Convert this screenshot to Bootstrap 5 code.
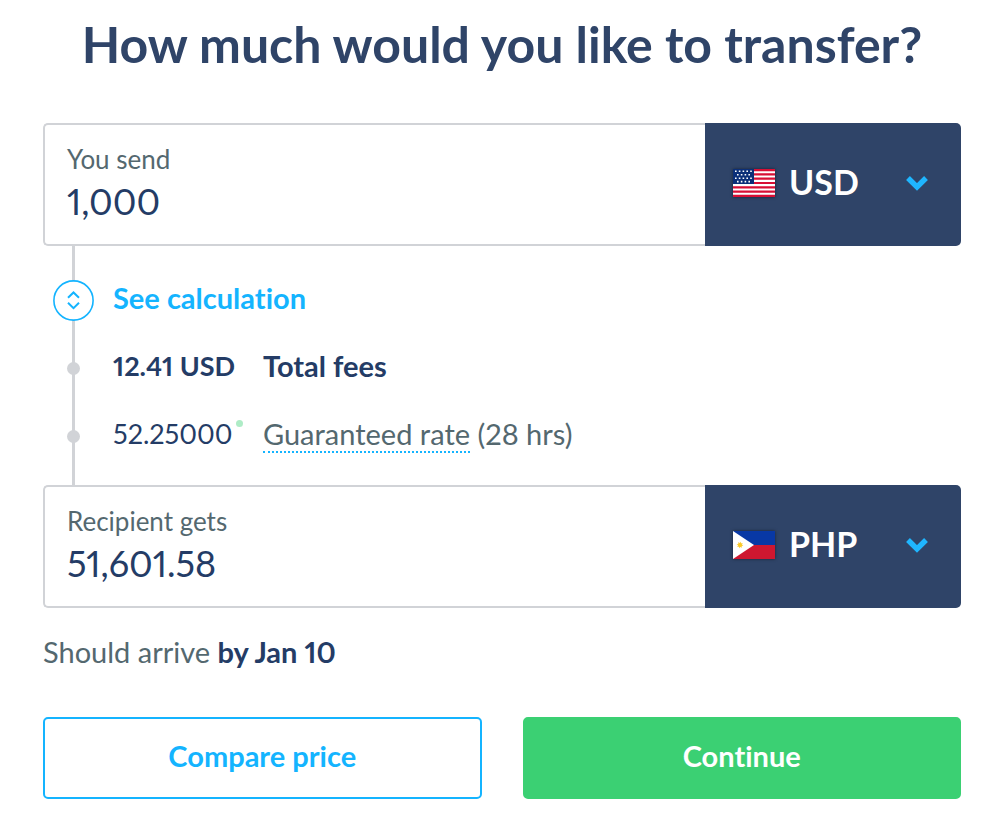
<!DOCTYPE html>
<html lang="en">
<head>
<meta charset="utf-8">
<meta name="viewport" content="width=device-width, initial-scale=1">
<title>Transfer</title>
<link rel="stylesheet" href="https://cdn.jsdelivr.net/npm/bootstrap@5.3.0/dist/css/bootstrap.min.css">
<style>
  :root { --navy: #2f4468; --ink: #243c66; --sky: #14b4ff; --slate: #54686f; --line: #d1d3d7; --go: #3bd073; }
  body { font-family: Lato, "Liberation Sans", sans-serif; font-size: 29px; line-height: 36px; color: var(--slate); background: #fff; }
  body, button, input, select { font-variant-ligatures: none; font-variant-numeric: proportional-nums; }
  .calculator { padding: 14px 39px 39px 43px; }
  .headline { font-size: 50px; line-height: 60px; font-weight: 700; color: var(--navy); margin-bottom: 49px; }
  .money { height: 123px; }
  .money-field { border: 2px solid var(--line); border-right: 0; border-radius: 5px 0 0 5px; padding: 18px 22px; }
  .money-field label { font-size: 26px; line-height: 32px; }
  .money-field input { font-size: 36px; line-height: 48px; height: 52px; color: var(--ink); border: 0; padding: 0; background: none; outline: 0; }
  .currency { width: 256px; }
  .currency select { appearance: none; border: 0; border-radius: 0 5px 5px 0; background: var(--navy); color: #fff; font-size: 34px; font-weight: 700; padding: 0 84px 5px; cursor: pointer; }
  .currency svg { position: absolute; top: calc(50% - 2px); transform: translateY(-50%); pointer-events: none; }
  .flag { left: 28px; box-shadow: 0 0 3px rgba(0,0,0,.5); }
  .chevron { right: 32px; }
  .steps { list-style: none; padding: 20px 0 15px 10px; margin: 0; background: linear-gradient(var(--line), var(--line)) 29px 0 / 3px 100% no-repeat; }
  .steps li { height: 68px; display: flex; align-items: center; gap: 19px; }
  .marker { width: 41px; display: flex; justify-content: center; flex: none; }
  .dot { width: 13px; height: 13px; border-radius: 50%; background: var(--line); }
  .toggle { border: 0; background: none; padding: 0; color: var(--sky); font-weight: 700; gap: 19px; }
  .step-text { padding-bottom: 5px; }
  .amount { width: 131px; flex: none; font-size: 27px; color: var(--ink); white-space: nowrap; }
  .fees { font-weight: 700; color: var(--ink); }
  .live { width: 7px; height: 7px; border-radius: 50%; background: #aeecc6; position: absolute; top: 4px; right: 1px; }
  .rate { color: inherit; text-decoration: none; border-bottom: 2px dotted var(--sky); }
  .arrival { margin: 26px 0 47px; }
  .arrival strong { color: var(--ink); }
  .actions { gap: 41px; }
  .actions .btn { flex: 1 1 0; height: 82px; font-size: 29px; font-weight: 700; border-width: 2px; border-radius: 5px; padding-bottom: 10px; }
  .btn-compare { border-color: var(--sky); color: var(--sky); background: #fff; }
  .btn-go { background: var(--go); color: #fff; border-color: var(--go); }
</style>
</head>
<body>
<main class="calculator">
  <h1 class="headline text-center">How much would you like to transfer?</h1>
  <form>
    <div class="money d-flex">
      <div class="money-field flex-grow-1 d-flex flex-column">
        <label for="send">You send</label>
        <input id="send" class="w-100" type="text" inputmode="decimal" value="1,000">
      </div>
      <div class="currency position-relative">
        <select class="w-100 h-100" aria-label="Currency you send"><option selected>USD</option><option>PHP</option></select>
        <svg class="flag" width="42" height="28" viewBox="0 0 42 28" aria-hidden="true">
          <path fill="#fff" d="M0 0h42v28H0z"/>
          <path stroke="#d80f35" stroke-width="2.15" d="M0 1.08h42M0 5.38h42M0 9.69h42M0 14h42M0 18.3h42M0 22.6h42M0 26.9h42"/>
          <path fill="#0b2f78" d="M0 0h21v15H0z"/>
          <path stroke="#fff" stroke-width="1.6" stroke-dasharray="1.6 2.2" d="M2 2.3h17M4 5.8h15M2 9.3h17M4 12.6h15"/>
        </svg>
        <svg class="chevron" width="24" height="16" viewBox="0 0 24 16" aria-hidden="true"><path d="M3 3l9 9 9-9" fill="none" stroke="#1fb6ff" stroke-width="5.4"/></svg>
      </div>
    </div>
    <ul class="steps">
      <li>
        <button type="button" class="toggle d-flex align-items-center">
          <svg width="41" height="41" viewBox="0 0 41 41" aria-hidden="true"><circle cx="20.5" cy="20.5" r="19.6" fill="#fff" stroke="#14b4ff" stroke-width="1.6"/><path d="M15 17.8l5.5-5.3 5.5 5.3M15 22.8l5.5 5.3 5.5-5.3" fill="none" stroke="#14b4ff" stroke-width="2"/></svg>
          <span class="step-text">See calculation</span>
        </button>
      </li>
      <li class="fees"><span class="marker"><span class="dot"></span></span><span class="amount step-text">12.41 USD</span><span class="step-text">Total fees</span></li>
      <li><span class="marker"><span class="dot"></span></span><span class="amount step-text position-relative">52.25000<span class="live"></span></span><span class="step-text"><a href="#rate" class="rate">Guaranteed rate</a> (28 hrs)</span></li>
    </ul>
    <div class="money d-flex">
      <div class="money-field flex-grow-1 d-flex flex-column">
        <label for="receive">Recipient gets</label>
        <input id="receive" class="w-100" type="text" inputmode="decimal" value="51,601.58">
      </div>
      <div class="currency position-relative">
        <select class="w-100 h-100" aria-label="Currency recipient gets"><option>USD</option><option selected>PHP</option></select>
        <svg class="flag" width="42" height="28" viewBox="0 0 42 28" aria-hidden="true">
          <path fill="#0838a5" d="M0 0h42v14H0z"/><path fill="#ce1730" d="M0 14h42v14H0z"/><path fill="#fff" d="M0 0l21 14L0 28z"/>
          <circle cx="7" cy="14" r="2.2" fill="#fbc927"/><circle cx="7" cy="14" r="2.6" fill="none" stroke="#fbc927" stroke-width="1" stroke-dasharray="1 1"/>
        </svg>
        <svg class="chevron" width="24" height="16" viewBox="0 0 24 16" aria-hidden="true"><path d="M3 3l9 9 9-9" fill="none" stroke="#1fb6ff" stroke-width="5.4"/></svg>
      </div>
    </div>
    <p class="arrival">Should arrive <strong>by Jan 10</strong></p>
    <div class="actions d-flex">
      <button type="button" class="btn btn-compare">Compare price</button>
      <button type="submit" class="btn btn-go">Continue</button>
    </div>
  </form>
</main>
<script src="https://cdn.jsdelivr.net/npm/bootstrap@5.3.0/dist/js/bootstrap.bundle.min.js"></script>
</body>
</html>
